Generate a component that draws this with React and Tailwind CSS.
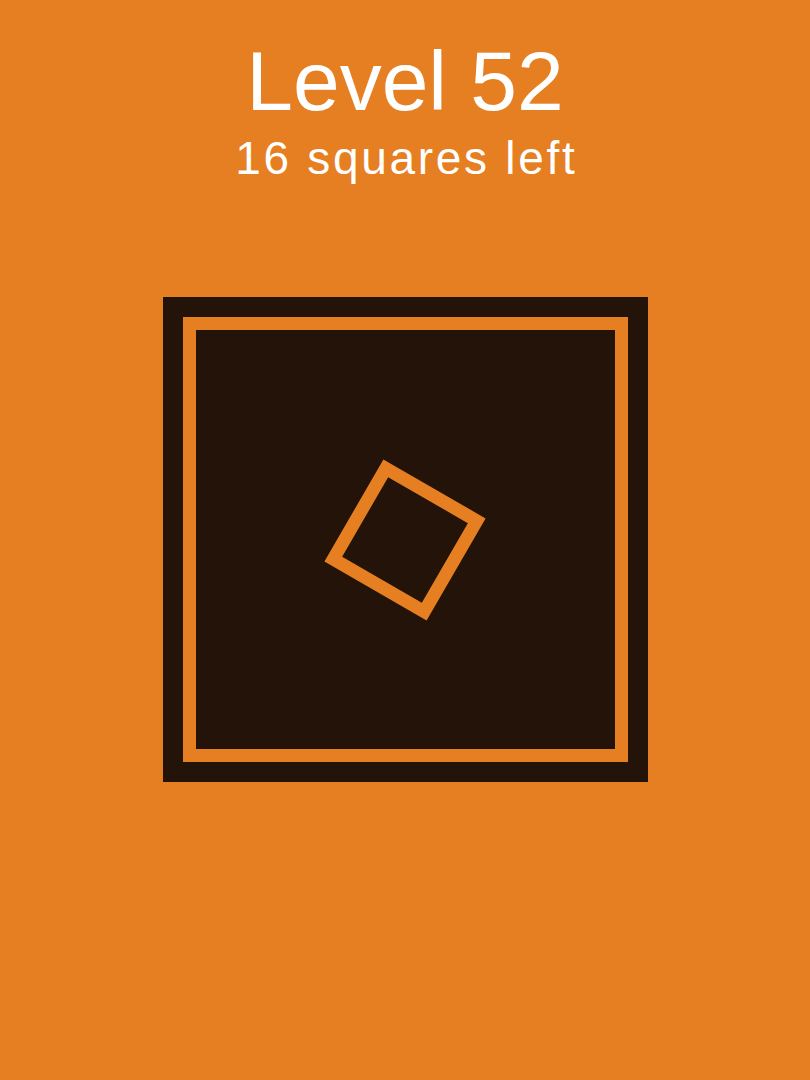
export default function App() {
  return (
    <div className="min-h-screen w-full bg-[#e67e22] flex flex-col items-center pt-[39px] text-white" style={{ fontFamily: '"Liberation Sans", Arial, sans-serif' }}>
      <h1 className="text-[84px] leading-none font-normal">Level 52</h1>
      <p className="mt-[12px] text-[46px] leading-none tracking-[2.7px] pl-[2.7px]">16 squares left</p>

      {/* board */}
      <div className="mt-[116px] w-[485px] h-[485px] bg-[#231308] p-[20px] flex">
        <div className="flex-1 border-[13px] border-[#e67e22] flex items-center justify-center">
          <div className="w-[118px] h-[118px] border-[13px] border-[#e67e22] rotate-[30deg]" />
        </div>
      </div>
    </div>
  );
}
